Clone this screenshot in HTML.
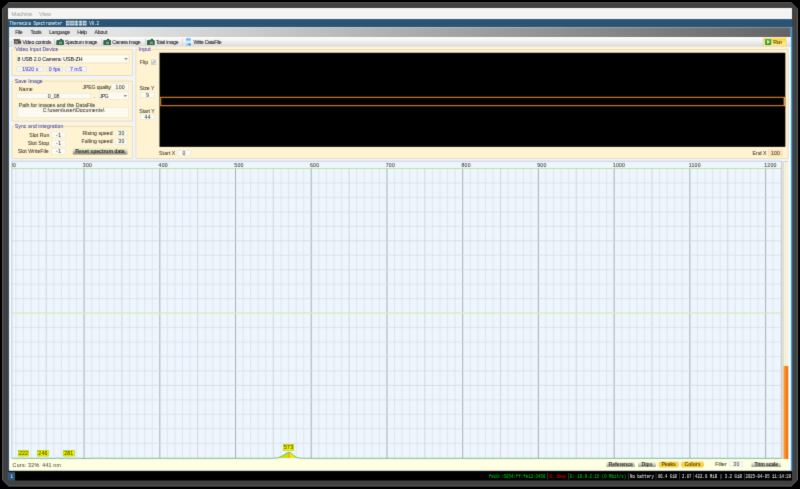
<!DOCTYPE html>
<html><head><meta charset="utf-8"><title>Theremino Spectrometer</title>
<style>
html,body{margin:0;padding:0;background:#000;width:800px;height:489px;overflow:hidden}
#s{position:absolute;left:0;top:0;width:3200px;height:1956px;transform:scale(0.25);transform-origin:0 0;overflow:hidden;filter:contrast(1.001);font-family:"Liberation Sans",sans-serif}
#w{position:absolute;left:0;top:0;width:800px;height:489px;overflow:hidden;filter:url(#bl)}
#s div,#s span,#s svg{position:absolute;box-sizing:border-box}
#s span{white-space:pre;-webkit-text-stroke:0.22px}
</style></head><body>
<svg width="0" height="0" style="position:absolute"><filter id="bl" x="0" y="0" width="100%" height="100%" color-interpolation-filters="sRGB"><feConvolveMatrix order="3" kernelMatrix="0.0113 0.0838 0.0113 0.0838 0.6193 0.0838 0.0113 0.0838 0.0113" edgeMode="duplicate" preserveAlpha="true"/></filter></svg>
<div id="w"><div id="s">
<svg style="left:0;top:0" width="3200" height="1956" viewBox="0 0 800 489">
<polygon points="8.6,2.5 791.4,2.5 797.6,8.8 797.6,480 791.4,486.2 8.6,486.2 2.4,480 2.4,8.8" fill="#404040" stroke="#767676" stroke-width="0.6"/>
</svg>
<div style="left:32.00px;top:32.00px;width:3136.00px;height:44.80px;background:#f5f4f2"></div>
<span style="left:46.33px;top:43.40px;font-size:23.60px;line-height:23.60px;color:#a8a8a8;font-weight:400;font-family:'Liberation Sans',sans-serif;letter-spacing:-0.843px;word-spacing:0.843px;">Machine</span>
<span style="left:155.77px;top:43.40px;font-size:23.60px;line-height:23.60px;color:#a8a8a8;font-weight:400;font-family:'Liberation Sans',sans-serif;letter-spacing:-0.356px;word-spacing:0.356px;">View</span>
<div style="left:32.00px;top:76.80px;width:3136.00px;height:32.00px;background:#285577"></div>
<span style="left:37.60px;top:81.20px;font-size:22.40px;line-height:22.40px;color:rgba(255,255,255,.9);font-weight:400;font-family:'Liberation Mono',monospace;transform-origin:0 50%;transform:scaleX(0.7142);">Theremino Spectrometer</span>
<div style="left:263.60px;top:82.80px;width:14.24px;height:19.20px;background:repeating-linear-gradient(0deg,rgba(255,255,255,.7) 0 2.40px,rgba(255,255,255,.2) 2.40px 5.60px),repeating-linear-gradient(90deg,rgba(255,255,255,.4) 0 2.40px,transparent 2.40px 6.40px)"></div>
<div style="left:280.64px;top:82.80px;width:14.24px;height:19.20px;background:repeating-linear-gradient(0deg,rgba(255,255,255,.7) 0 2.40px,rgba(255,255,255,.2) 2.40px 5.60px),repeating-linear-gradient(90deg,rgba(255,255,255,.4) 0 2.40px,transparent 2.40px 6.40px)"></div>
<div style="left:297.68px;top:82.80px;width:14.24px;height:19.20px;background:repeating-linear-gradient(0deg,rgba(255,255,255,.7) 0 2.40px,rgba(255,255,255,.2) 2.40px 5.60px),repeating-linear-gradient(90deg,rgba(255,255,255,.4) 0 2.40px,transparent 2.40px 6.40px)"></div>
<div style="left:314.72px;top:82.80px;width:14.24px;height:19.20px;background:repeating-linear-gradient(0deg,rgba(255,255,255,.7) 0 2.40px,rgba(255,255,255,.2) 2.40px 5.60px),repeating-linear-gradient(90deg,rgba(255,255,255,.4) 0 2.40px,transparent 2.40px 6.40px)"></div>
<div style="left:331.76px;top:82.80px;width:14.24px;height:19.20px;background:repeating-linear-gradient(0deg,rgba(255,255,255,.7) 0 2.40px,rgba(255,255,255,.2) 2.40px 5.60px),repeating-linear-gradient(90deg,rgba(255,255,255,.4) 0 2.40px,transparent 2.40px 6.40px)"></div>
<span style="left:356.80px;top:81.20px;font-size:22.40px;line-height:22.40px;color:rgba(255,255,255,.9);font-weight:400;font-family:'Liberation Mono',monospace;transform-origin:0 50%;transform:scaleX(0.7290);">V8.2</span>
<div style="left:32.00px;top:108.00px;width:4.80px;height:1777.20px;background:#285577"></div>
<div style="left:32.00px;top:1882.00px;width:3136.00px;height:3.20px;background:#285577"></div>
<div style="left:3163.20px;top:108.00px;width:5.60px;height:1777.20px;background:#2e9ef4"></div>
<div style="left:36.80px;top:108.00px;width:3126.40px;height:1774.40px;background:#eef5fe"></div>
<div style="left:36.80px;top:187.20px;width:5.20px;height:1650.00px;background:#fbfdff"></div>
<div style="left:3154.40px;top:187.20px;width:8.80px;height:1650.00px;background:#f8fbff"></div>
<div style="left:36.80px;top:108.80px;width:3126.40px;height:39.20px;background:linear-gradient(90deg,#e9e9e9 0%,#e2e2e2 15%,#9c9c9c 62%,#646464 100%)"></div>
<span style="left:60.77px;top:118.80px;font-size:20.80px;line-height:20.80px;color:#1c1c1c;font-weight:400;font-family:'Liberation Sans',sans-serif;letter-spacing:-1.151px;word-spacing:1.151px;">File</span>
<span style="left:122.06px;top:118.80px;font-size:20.80px;line-height:20.80px;color:#1c1c1c;font-weight:400;font-family:'Liberation Sans',sans-serif;letter-spacing:-0.969px;word-spacing:0.969px;">Tools</span>
<span style="left:197.09px;top:118.80px;font-size:20.80px;line-height:20.80px;color:#1c1c1c;font-weight:400;font-family:'Liberation Sans',sans-serif;letter-spacing:-1.304px;word-spacing:1.304px;">Language</span>
<span style="left:308.76px;top:118.80px;font-size:20.80px;line-height:20.80px;color:#1c1c1c;font-weight:400;font-family:'Liberation Sans',sans-serif;letter-spacing:-1.167px;word-spacing:1.167px;">Help</span>
<span style="left:378.20px;top:118.80px;font-size:20.80px;line-height:20.80px;color:#1c1c1c;font-weight:400;font-family:'Liberation Sans',sans-serif;letter-spacing:-0.689px;word-spacing:0.689px;">About</span>
<div style="left:36.80px;top:148.00px;width:3126.40px;height:39.20px;background:linear-gradient(180deg,#fdfdfd 0%,#f1f1f1 45%,#d9d9d9 100%)"></div>
<div style="left:44.80px;top:154.40px;width:2.80px;height:26.40px;background:repeating-linear-gradient(180deg,#b8b8b8 0 2.40px,transparent 2.40px 5.20px)"></div>
<span style="left:89.51px;top:158.00px;font-size:20.80px;line-height:20.80px;color:#1c1c1c;font-weight:400;font-family:'Liberation Sans',sans-serif;letter-spacing:-1.271px;word-spacing:1.271px;">Video controls</span>
<span style="left:260.40px;top:158.00px;font-size:20.80px;line-height:20.80px;color:#1c1c1c;font-weight:400;font-family:'Liberation Sans',sans-serif;letter-spacing:-1.887px;word-spacing:1.887px;">Spectrum image</span>
<span style="left:449.00px;top:158.00px;font-size:20.80px;line-height:20.80px;color:#1c1c1c;font-weight:400;font-family:'Liberation Sans',sans-serif;letter-spacing:-2.282px;word-spacing:2.282px;">Camera image</span>
<span style="left:623.67px;top:158.00px;font-size:20.80px;line-height:20.80px;color:#1c1c1c;font-weight:400;font-family:'Liberation Sans',sans-serif;letter-spacing:-1.746px;word-spacing:1.746px;">Total image</span>
<span style="left:773.76px;top:158.00px;font-size:20.80px;line-height:20.80px;color:#1c1c1c;font-weight:400;font-family:'Liberation Sans',sans-serif;letter-spacing:-1.575px;word-spacing:1.575px;">Write DataFile</span>
<div style="left:216.40px;top:154.40px;width:2.40px;height:27.20px;background:#c4c4c4"></div>
<div style="left:404.00px;top:154.40px;width:2.40px;height:27.20px;background:#c4c4c4"></div>
<div style="left:580.40px;top:154.40px;width:2.40px;height:27.20px;background:#c4c4c4"></div>
<div style="left:728.80px;top:154.40px;width:2.40px;height:27.20px;background:#c4c4c4"></div>
<svg style="left:225.20px;top:153.60px" width="32.0" height="26.4" viewBox="0 0 8 6.6">
<rect x="3.7" y="0.3" width="2.3" height="2" rx="0.3" fill="#2a4a33"/>
<rect x="0.1" y="1.6" width="7.6" height="4.8" rx="0.55" fill="#2c6240"/>
<rect x="0.1" y="3" width="1.6" height="3.4" rx="0.4" fill="#206a50"/>
<rect x="0.5" y="1.9" width="6.8" height="0.9" rx="0.4" fill="#3a7650"/>
<rect x="2.9" y="3.2" width="2.8" height="2.4" rx="0.3" fill="#a2c0a4"/>
<rect x="3.6" y="3.9" width="1.4" height="1.1" fill="#587a5e"/>
</svg>
<svg style="left:413.20px;top:153.60px" width="32.0" height="26.4" viewBox="0 0 8 6.6">
<rect x="3.7" y="0.3" width="2.3" height="2" rx="0.3" fill="#2a4a33"/>
<rect x="0.1" y="1.6" width="7.6" height="4.8" rx="0.55" fill="#2c6240"/>
<rect x="0.1" y="3" width="1.6" height="3.4" rx="0.4" fill="#206a50"/>
<rect x="0.5" y="1.9" width="6.8" height="0.9" rx="0.4" fill="#3a7650"/>
<rect x="2.9" y="3.2" width="2.8" height="2.4" rx="0.3" fill="#a2c0a4"/>
<rect x="3.6" y="3.9" width="1.4" height="1.1" fill="#587a5e"/>
</svg>
<svg style="left:588.40px;top:153.60px" width="32.0" height="26.4" viewBox="0 0 8 6.6">
<rect x="3.7" y="0.3" width="2.3" height="2" rx="0.3" fill="#2a4a33"/>
<rect x="0.1" y="1.6" width="7.6" height="4.8" rx="0.55" fill="#2c6240"/>
<rect x="0.1" y="3" width="1.6" height="3.4" rx="0.4" fill="#206a50"/>
<rect x="0.5" y="1.9" width="6.8" height="0.9" rx="0.4" fill="#3a7650"/>
<rect x="2.9" y="3.2" width="2.8" height="2.4" rx="0.3" fill="#a2c0a4"/>
<rect x="3.6" y="3.9" width="1.4" height="1.1" fill="#587a5e"/>
</svg>
<svg style="left:52.80px;top:156.00px" width="32.8" height="22.4" viewBox="0 0 16 11">
<rect x="0.3" y="0.2" width="10" height="2.4" fill="#555"/>
<rect x="1.5" y="2.4" width="10.5" height="6.8" fill="#2e2e2e"/>
<rect x="3.2" y="3.8" width="6.5" height="3.6" fill="#a8a860"/>
<rect x="3.2" y="6.2" width="4" height="1.4" fill="#b05040"/>
<polygon points="11.5,5.4 15.6,2.6 15.6,9.6 11.5,7.8" fill="#2a2a2a"/>
<rect x="4" y="9.2" width="9.5" height="1.5" fill="#777"/>
<rect x="10" y="0.4" width="3.6" height="2.4" fill="#444"/>
</svg>
<svg style="left:742.40px;top:152.00px" width="22.4" height="32.0" viewBox="0 0 5.6 8">
<rect x="0.3" y="0.3" width="5" height="7.4" rx="0.6" fill="#d6ecfb"/>
<path d="M0.3,0.9 Q0.3,0.3 0.9,0.3 L4.7,0.3 Q5.3,0.3 5.3,0.9 L5.1,2.2 Q2.6,3.2 0.5,2.3 Z" fill="#6cb9e9"/>
<path d="M0.4,5.6 Q2.6,5.0 5.3,5.5 L5.3,7.1 Q5.3,7.7 4.7,7.7 L0.9,7.7 Q0.3,7.7 0.3,7.1 Z" fill="#8ccaf1"/>
<ellipse cx="4.2" cy="6.5" rx="1.25" ry="1.1" fill="#3a86c6"/>
</svg>
<div style="left:3051.60px;top:150.80px;width:94.40px;height:34.40px;background:linear-gradient(180deg,#ffd51e 0%,#ffe45c 50%,#fff3b4 100%);border:2.00px solid #f3c35a;border-radius:3.20px"></div>
<svg style="left:3060.00px;top:156.00px" width="25.6" height="24.4" viewBox="0 0 12 12">
<rect x="0" y="0" width="12" height="12" rx="1" fill="#2e9a3c"/><rect x="0" y="0" width="12" height="5" rx="1" fill="#46b254"/>
<polygon points="4,2.2 9.3,6 4,9.8" fill="#f4fff0"/></svg>
<span style="left:3092.74px;top:158.00px;font-size:20.80px;line-height:20.80px;color:#3a3210;font-weight:400;font-family:'Liberation Sans',sans-serif;letter-spacing:-1.215px;word-spacing:1.215px;">Run</span>
<div style="left:46.40px;top:187.20px;width:484.40px;height:116.40px;background:#fff3d1"></div>
<div style="left:46.40px;top:196.40px;width:484.40px;height:107.20px;border:3.00px solid #ddd6be;border-radius:2.40px"></div>
<div style="left:57.20px;top:192.00px;width:179.60px;height:12.00px;background:#fff3d1"></div>
<span style="left:60.50px;top:188.40px;font-size:20.80px;line-height:20.80px;color:#4640b0;font-weight:400;font-family:'Liberation Sans',sans-serif;letter-spacing:-0.082px;word-spacing:0.082px;">Video Input Device</span>
<div style="left:46.40px;top:313.60px;width:484.40px;height:172.80px;background:#fff3d1"></div>
<div style="left:46.40px;top:322.80px;width:484.40px;height:163.60px;border:3.00px solid #ddd6be;border-radius:2.40px"></div>
<div style="left:55.60px;top:318.40px;width:118.80px;height:12.00px;background:#fff3d1"></div>
<span style="left:59.01px;top:314.80px;font-size:20.80px;line-height:20.80px;color:#4640b0;font-weight:400;font-family:'Liberation Sans',sans-serif;letter-spacing:0.123px;word-spacing:-0.123px;">Save Image</span>
<div style="left:46.40px;top:492.80px;width:484.40px;height:142.40px;background:#fff3d1"></div>
<div style="left:46.40px;top:503.60px;width:484.40px;height:131.60px;border:3.00px solid #ddd6be;border-radius:2.40px"></div>
<div style="left:55.20px;top:499.20px;width:201.60px;height:12.00px;background:#fff3d1"></div>
<span style="left:58.69px;top:495.60px;font-size:20.80px;line-height:20.80px;color:#4640b0;font-weight:400;font-family:'Liberation Sans',sans-serif;letter-spacing:0.293px;word-spacing:-0.293px;">Sync and integration</span>
<div style="left:541.60px;top:187.20px;width:2612.00px;height:448.00px;background:#fff3d1"></div>
<div style="left:541.60px;top:196.40px;width:2612.00px;height:438.80px;border:3.00px solid #ddd6be;border-radius:2.40px"></div>
<div style="left:550.80px;top:192.00px;width:55.60px;height:12.00px;background:#fff3d1"></div>
<span style="left:554.41px;top:188.40px;font-size:20.80px;line-height:20.80px;color:#4640b0;font-weight:400;font-family:'Liberation Sans',sans-serif;letter-spacing:0.530px;word-spacing:-0.530px;">Input</span>
<div style="left:65.60px;top:217.60px;width:452.00px;height:35.20px;background:linear-gradient(180deg,#fffdf6,#fff9ea);border:2.40px solid #d8d2c0;border-radius:2.40px"></div>
<span style="left:70.43px;top:225.60px;font-size:20.80px;line-height:20.80px;color:#101010;font-weight:400;font-family:'Liberation Sans',sans-serif;letter-spacing:-0.232px;word-spacing:0.232px;">8 USB 2.0 Camera: USB-ZH</span>
<svg style="left:495.60px;top:232.00px" width="16.0" height="8.8" viewBox="0 0 10 6"><polygon points="0,0 10,0 5,6" fill="#8a8a8a"/></svg>
<div style="left:66.00px;top:266.40px;width:110.00px;height:20.80px;background:#f4f3f3;border:2.00px solid #d8d8dc"></div>
<span style="left:88.79px;top:266.80px;font-size:20.80px;line-height:20.80px;color:#3a36c8;font-weight:400;font-family:'Liberation Sans',sans-serif;letter-spacing:0.492px;word-spacing:-0.492px;">1920 x</span>
<div style="left:184.80px;top:266.40px;width:67.20px;height:20.80px;background:#f4f3f3;border:2.00px solid #d8d8dc"></div>
<span style="left:195.17px;top:266.80px;font-size:20.80px;line-height:20.80px;color:#3a36c8;font-weight:400;font-family:'Liberation Sans',sans-serif;letter-spacing:0.455px;word-spacing:-0.455px;">0 fps</span>
<div style="left:260.80px;top:266.40px;width:87.20px;height:20.80px;background:#f4f3f3;border:2.00px solid #d8d8dc"></div>
<span style="left:279.87px;top:266.80px;font-size:20.80px;line-height:20.80px;color:#3a36c8;font-weight:400;font-family:'Liberation Sans',sans-serif;letter-spacing:0.254px;word-spacing:-0.254px;">7 mS</span>
<span style="left:74.67px;top:346.40px;font-size:20.80px;line-height:20.80px;color:#3c382e;font-weight:400;font-family:'Liberation Sans',sans-serif;letter-spacing:0.257px;word-spacing:-0.257px;">Name</span>
<span style="left:330.17px;top:337.20px;font-size:20.80px;line-height:20.80px;color:#3c382e;font-weight:400;font-family:'Liberation Sans',sans-serif;letter-spacing:-0.738px;word-spacing:0.738px;">JPEG quality</span>
<div style="left:446.40px;top:333.60px;width:68.00px;height:26.40px;background:#fffaf0;border:2.00px solid #cfe6e2"></div>
<span style="left:462.24px;top:336.80px;font-size:20.80px;line-height:20.80px;color:#3c3c3c;font-weight:400;font-family:'Liberation Sans',sans-serif;letter-spacing:0.802px;word-spacing:-0.802px;">100</span>
<div style="left:65.20px;top:372.00px;width:298.80px;height:22.40px;background:#fffaf0;border:2.00px solid #cfe6e2"></div>
<span style="left:191.22px;top:373.20px;font-size:20.80px;line-height:20.80px;color:#3c3c3c;font-weight:400;font-family:'Liberation Sans',sans-serif;letter-spacing:0.160px;word-spacing:-0.160px;">0_08</span>
<span style="left:375.91px;top:376.00px;font-size:20.80px;line-height:20.80px;color:#3c382e;font-weight:400;font-family:'Liberation Sans',sans-serif;letter-spacing:2.730px;word-spacing:-2.730px;">.</span>
<div style="left:397.20px;top:367.20px;width:118.80px;height:31.60px;background:#fffaf0;border:2.40px solid #cfe6e2"></div>
<span style="left:398.95px;top:373.20px;font-size:20.80px;line-height:20.80px;color:#3c382e;font-weight:400;font-family:'Liberation Sans',sans-serif;letter-spacing:-2.380px;word-spacing:2.380px;">JPG</span>
<svg style="left:492.80px;top:379.60px" width="16.0" height="8.8" viewBox="0 0 10 6"><polygon points="0,0 10,0 5,6" fill="#8a8a8a"/></svg>
<span style="left:74.59px;top:408.80px;font-size:20.80px;line-height:20.80px;color:#3c382e;font-weight:400;font-family:'Liberation Sans',sans-serif;letter-spacing:0.090px;word-spacing:-0.090px;">Path for images and the DataFile</span>
<div style="left:68.00px;top:429.20px;width:447.60px;height:41.20px;background:#fffaf0;border:2.00px solid #cfe6e2"></div>
<span style="left:170.68px;top:431.20px;font-size:20.80px;line-height:20.80px;color:#3c382e;font-weight:400;font-family:'Liberation Sans',sans-serif;letter-spacing:0.270px;word-spacing:-0.270px;">C:\users\user\Documents\</span>
<span style="left:116.63px;top:530.00px;font-size:20.80px;line-height:20.80px;color:#3c382e;font-weight:400;font-family:'Liberation Sans',sans-serif;letter-spacing:0.162px;word-spacing:-0.162px;">Slot Run</span>
<span style="left:110.63px;top:562.40px;font-size:20.80px;line-height:20.80px;color:#3c382e;font-weight:400;font-family:'Liberation Sans',sans-serif;letter-spacing:0.163px;word-spacing:-0.163px;">Slot Stop</span>
<span style="left:70.59px;top:594.00px;font-size:20.80px;line-height:20.80px;color:#3c382e;font-weight:400;font-family:'Liberation Sans',sans-serif;letter-spacing:0.094px;word-spacing:-0.094px;">Slot WriteFile</span>
<div style="left:204.80px;top:526.80px;width:58.40px;height:25.20px;background:#fffaf0;border:2.00px solid #cfe6e2"></div>
<span style="left:223.85px;top:529.40px;font-size:20.80px;line-height:20.80px;color:#3c3c3c;font-weight:400;font-family:'Liberation Sans',sans-serif;letter-spacing:1.808px;word-spacing:-1.808px;">-1</span>
<div style="left:204.80px;top:561.20px;width:58.40px;height:25.60px;background:#fffaf0;border:2.00px solid #cfe6e2"></div>
<span style="left:223.85px;top:564.00px;font-size:20.80px;line-height:20.80px;color:#3c3c3c;font-weight:400;font-family:'Liberation Sans',sans-serif;letter-spacing:1.808px;word-spacing:-1.808px;">-1</span>
<div style="left:204.80px;top:593.60px;width:58.40px;height:25.20px;background:#fffaf0;border:2.00px solid #cfe6e2"></div>
<span style="left:223.85px;top:596.20px;font-size:20.80px;line-height:20.80px;color:#3c3c3c;font-weight:400;font-family:'Liberation Sans',sans-serif;letter-spacing:1.808px;word-spacing:-1.808px;">-1</span>
<span style="left:330.14px;top:523.20px;font-size:20.80px;line-height:20.80px;color:#3c382e;font-weight:400;font-family:'Liberation Sans',sans-serif;letter-spacing:-0.013px;word-spacing:0.013px;">Rising speed</span>
<span style="left:326.16px;top:555.60px;font-size:20.80px;line-height:20.80px;color:#3c382e;font-weight:400;font-family:'Liberation Sans',sans-serif;letter-spacing:0.032px;word-spacing:-0.032px;">Falling speed</span>
<div style="left:460.00px;top:521.60px;width:50.00px;height:22.80px;background:#fffaf0;border:2.00px solid #cfe6e2"></div>
<span style="left:472.79px;top:523.00px;font-size:20.80px;line-height:20.80px;color:#3c3c3c;font-weight:400;font-family:'Liberation Sans',sans-serif;letter-spacing:1.288px;word-spacing:-1.288px;">30</span>
<div style="left:460.00px;top:554.40px;width:50.00px;height:23.60px;background:#fffaf0;border:2.00px solid #cfe6e2"></div>
<span style="left:472.79px;top:556.20px;font-size:20.80px;line-height:20.80px;color:#3c3c3c;font-weight:400;font-family:'Liberation Sans',sans-serif;letter-spacing:1.288px;word-spacing:-1.288px;">30</span>
<div style="left:290.80px;top:592.00px;width:219.20px;height:26.00px;background:linear-gradient(180deg,#f4f4cc 0%,#e4e4c8 30%,#bcbcae 62%,#7c7c72 100%);border-radius:4.00px"></div>
<span style="left:301.13px;top:593.80px;font-size:20.80px;line-height:20.80px;color:#262622;font-weight:700;font-family:'Liberation Sans',sans-serif;letter-spacing:-0.429px;word-spacing:0.429px;-webkit-text-stroke:0;">Reset spectrum data</span>
<span style="left:558.57px;top:239.20px;font-size:20.80px;line-height:20.80px;color:#463c2c;font-weight:400;font-family:'Liberation Sans',sans-serif;letter-spacing:0.049px;word-spacing:-0.049px;">Flip</span>
<div style="left:604.40px;top:238.80px;width:19.20px;height:20.00px;background:#f4f6fa;border:2.40px solid #a4a8b4"></div>
<svg style="left:606.40px;top:240.80px" width="16" height="16" viewBox="0 0 10 10"><path d="M1.8,5.6 L4,7.8 L8.4,2.2" fill="none" stroke="#4a4a4a" stroke-width="1.7"/></svg>
<span style="left:558.46px;top:341.60px;font-size:20.80px;line-height:20.80px;color:#3c382e;font-weight:400;font-family:'Liberation Sans',sans-serif;letter-spacing:-0.166px;word-spacing:0.166px;">Size Y</span>
<div style="left:560.00px;top:368.00px;width:60.00px;height:22.40px;background:#fffaf0;border:2.00px solid #cfe6e2"></div>
<span style="left:584.22px;top:369.20px;font-size:20.80px;line-height:20.80px;color:#3c3c3c;font-weight:400;font-family:'Liberation Sans',sans-serif;letter-spacing:2.742px;word-spacing:-2.742px;">9</span>
<span style="left:556.85px;top:433.60px;font-size:20.80px;line-height:20.80px;color:#3c382e;font-weight:400;font-family:'Liberation Sans',sans-serif;letter-spacing:-0.182px;word-spacing:0.182px;">Start Y</span>
<div style="left:560.00px;top:456.80px;width:60.00px;height:21.60px;background:#fffaf0;border:2.00px solid #cfe6e2"></div>
<span style="left:577.79px;top:457.60px;font-size:20.80px;line-height:20.80px;color:#3c3c3c;font-weight:400;font-family:'Liberation Sans',sans-serif;letter-spacing:1.288px;word-spacing:-1.288px;">44</span>
<span style="left:636.29px;top:603.20px;font-size:20.80px;line-height:20.80px;color:#3c382e;font-weight:400;font-family:'Liberation Sans',sans-serif;letter-spacing:0.289px;word-spacing:-0.289px;">Start X</span>
<div style="left:708.00px;top:602.00px;width:56.00px;height:22.40px;background:#fffaf0;border:2.00px solid #cfe6e2"></div>
<span style="left:730.22px;top:603.20px;font-size:20.80px;line-height:20.80px;color:#3c3c3c;font-weight:400;font-family:'Liberation Sans',sans-serif;letter-spacing:2.742px;word-spacing:-2.742px;">0</span>
<span style="left:3010.33px;top:603.60px;font-size:20.80px;line-height:20.80px;color:#3c382e;font-weight:400;font-family:'Liberation Sans',sans-serif;letter-spacing:-0.438px;word-spacing:0.438px;">End X</span>
<div style="left:3073.20px;top:601.20px;width:57.20px;height:23.60px;background:#ffe2b4;border:2.00px solid #f0dcb4"></div>
<span style="left:3083.64px;top:603.00px;font-size:20.80px;line-height:20.80px;color:#3c3c3c;font-weight:400;font-family:'Liberation Sans',sans-serif;letter-spacing:0.802px;word-spacing:-0.802px;">100</span>
<div style="left:637.20px;top:210.00px;width:2504.00px;height:377.60px;background:#8a8a88"></div>
<div style="left:639.20px;top:212.00px;width:2502.00px;height:374.80px;background:#000"></div>
<div style="left:640.00px;top:387.20px;width:2499.60px;height:38.00px;border:5.40px solid #c87a04"></div>
<div style="left:3135.20px;top:388.80px;width:4.80px;height:35.20px;background:#f0a030"></div>
<svg style="left:0;top:0" width="3200" height="1956" viewBox="0 0 800 489">
<rect x="11.8" y="161.2" width="769.7" height="297.2" fill="#edf5fe"/>
<line x1="15.95" y1="168.5" x2="15.95" y2="458.4" stroke="#d9d9dc" stroke-width="0.55"/>
<line x1="23.52" y1="168.5" x2="23.52" y2="458.4" stroke="#d9d9dc" stroke-width="0.55"/>
<line x1="31.10" y1="168.5" x2="31.10" y2="458.4" stroke="#d9d9dc" stroke-width="0.55"/>
<line x1="38.67" y1="168.5" x2="38.67" y2="458.4" stroke="#d9d9dc" stroke-width="0.55"/>
<line x1="46.24" y1="168.5" x2="46.24" y2="458.4" stroke="#c4c4c8" stroke-width="0.65"/>
<line x1="53.81" y1="168.5" x2="53.81" y2="458.4" stroke="#d9d9dc" stroke-width="0.55"/>
<line x1="61.38" y1="168.5" x2="61.38" y2="458.4" stroke="#d9d9dc" stroke-width="0.55"/>
<line x1="68.96" y1="168.5" x2="68.96" y2="458.4" stroke="#d9d9dc" stroke-width="0.55"/>
<line x1="76.53" y1="168.5" x2="76.53" y2="458.4" stroke="#d9d9dc" stroke-width="0.55"/>
<line x1="84.10" y1="168.5" x2="84.10" y2="458.4" stroke="#a6a6a8" stroke-width="0.9"/>
<line x1="91.67" y1="168.5" x2="91.67" y2="458.4" stroke="#d9d9dc" stroke-width="0.55"/>
<line x1="99.24" y1="168.5" x2="99.24" y2="458.4" stroke="#d9d9dc" stroke-width="0.55"/>
<line x1="106.82" y1="168.5" x2="106.82" y2="458.4" stroke="#d9d9dc" stroke-width="0.55"/>
<line x1="114.39" y1="168.5" x2="114.39" y2="458.4" stroke="#d9d9dc" stroke-width="0.55"/>
<line x1="121.96" y1="168.5" x2="121.96" y2="458.4" stroke="#c4c4c8" stroke-width="0.65"/>
<line x1="129.53" y1="168.5" x2="129.53" y2="458.4" stroke="#d9d9dc" stroke-width="0.55"/>
<line x1="137.10" y1="168.5" x2="137.10" y2="458.4" stroke="#d9d9dc" stroke-width="0.55"/>
<line x1="144.68" y1="168.5" x2="144.68" y2="458.4" stroke="#d9d9dc" stroke-width="0.55"/>
<line x1="152.25" y1="168.5" x2="152.25" y2="458.4" stroke="#d9d9dc" stroke-width="0.55"/>
<line x1="159.82" y1="168.5" x2="159.82" y2="458.4" stroke="#a6a6a8" stroke-width="0.9"/>
<line x1="167.39" y1="168.5" x2="167.39" y2="458.4" stroke="#d9d9dc" stroke-width="0.55"/>
<line x1="174.96" y1="168.5" x2="174.96" y2="458.4" stroke="#d9d9dc" stroke-width="0.55"/>
<line x1="182.54" y1="168.5" x2="182.54" y2="458.4" stroke="#d9d9dc" stroke-width="0.55"/>
<line x1="190.11" y1="168.5" x2="190.11" y2="458.4" stroke="#d9d9dc" stroke-width="0.55"/>
<line x1="197.68" y1="168.5" x2="197.68" y2="458.4" stroke="#c4c4c8" stroke-width="0.65"/>
<line x1="205.25" y1="168.5" x2="205.25" y2="458.4" stroke="#d9d9dc" stroke-width="0.55"/>
<line x1="212.82" y1="168.5" x2="212.82" y2="458.4" stroke="#d9d9dc" stroke-width="0.55"/>
<line x1="220.40" y1="168.5" x2="220.40" y2="458.4" stroke="#d9d9dc" stroke-width="0.55"/>
<line x1="227.97" y1="168.5" x2="227.97" y2="458.4" stroke="#d9d9dc" stroke-width="0.55"/>
<line x1="235.54" y1="168.5" x2="235.54" y2="458.4" stroke="#a6a6a8" stroke-width="0.9"/>
<line x1="243.11" y1="168.5" x2="243.11" y2="458.4" stroke="#d9d9dc" stroke-width="0.55"/>
<line x1="250.68" y1="168.5" x2="250.68" y2="458.4" stroke="#d9d9dc" stroke-width="0.55"/>
<line x1="258.26" y1="168.5" x2="258.26" y2="458.4" stroke="#d9d9dc" stroke-width="0.55"/>
<line x1="265.83" y1="168.5" x2="265.83" y2="458.4" stroke="#d9d9dc" stroke-width="0.55"/>
<line x1="273.40" y1="168.5" x2="273.40" y2="458.4" stroke="#c4c4c8" stroke-width="0.65"/>
<line x1="280.97" y1="168.5" x2="280.97" y2="458.4" stroke="#d9d9dc" stroke-width="0.55"/>
<line x1="288.54" y1="168.5" x2="288.54" y2="458.4" stroke="#d9d9dc" stroke-width="0.55"/>
<line x1="296.12" y1="168.5" x2="296.12" y2="458.4" stroke="#d9d9dc" stroke-width="0.55"/>
<line x1="303.69" y1="168.5" x2="303.69" y2="458.4" stroke="#d9d9dc" stroke-width="0.55"/>
<line x1="311.26" y1="168.5" x2="311.26" y2="458.4" stroke="#a6a6a8" stroke-width="0.9"/>
<line x1="318.83" y1="168.5" x2="318.83" y2="458.4" stroke="#d9d9dc" stroke-width="0.55"/>
<line x1="326.40" y1="168.5" x2="326.40" y2="458.4" stroke="#d9d9dc" stroke-width="0.55"/>
<line x1="333.98" y1="168.5" x2="333.98" y2="458.4" stroke="#d9d9dc" stroke-width="0.55"/>
<line x1="341.55" y1="168.5" x2="341.55" y2="458.4" stroke="#d9d9dc" stroke-width="0.55"/>
<line x1="349.12" y1="168.5" x2="349.12" y2="458.4" stroke="#c4c4c8" stroke-width="0.65"/>
<line x1="356.69" y1="168.5" x2="356.69" y2="458.4" stroke="#d9d9dc" stroke-width="0.55"/>
<line x1="364.26" y1="168.5" x2="364.26" y2="458.4" stroke="#d9d9dc" stroke-width="0.55"/>
<line x1="371.84" y1="168.5" x2="371.84" y2="458.4" stroke="#d9d9dc" stroke-width="0.55"/>
<line x1="379.41" y1="168.5" x2="379.41" y2="458.4" stroke="#d9d9dc" stroke-width="0.55"/>
<line x1="386.98" y1="168.5" x2="386.98" y2="458.4" stroke="#a6a6a8" stroke-width="0.9"/>
<line x1="394.55" y1="168.5" x2="394.55" y2="458.4" stroke="#d9d9dc" stroke-width="0.55"/>
<line x1="402.12" y1="168.5" x2="402.12" y2="458.4" stroke="#d9d9dc" stroke-width="0.55"/>
<line x1="409.70" y1="168.5" x2="409.70" y2="458.4" stroke="#d9d9dc" stroke-width="0.55"/>
<line x1="417.27" y1="168.5" x2="417.27" y2="458.4" stroke="#d9d9dc" stroke-width="0.55"/>
<line x1="424.84" y1="168.5" x2="424.84" y2="458.4" stroke="#c4c4c8" stroke-width="0.65"/>
<line x1="432.41" y1="168.5" x2="432.41" y2="458.4" stroke="#d9d9dc" stroke-width="0.55"/>
<line x1="439.98" y1="168.5" x2="439.98" y2="458.4" stroke="#d9d9dc" stroke-width="0.55"/>
<line x1="447.56" y1="168.5" x2="447.56" y2="458.4" stroke="#d9d9dc" stroke-width="0.55"/>
<line x1="455.13" y1="168.5" x2="455.13" y2="458.4" stroke="#d9d9dc" stroke-width="0.55"/>
<line x1="462.70" y1="168.5" x2="462.70" y2="458.4" stroke="#a6a6a8" stroke-width="0.9"/>
<line x1="470.27" y1="168.5" x2="470.27" y2="458.4" stroke="#d9d9dc" stroke-width="0.55"/>
<line x1="477.84" y1="168.5" x2="477.84" y2="458.4" stroke="#d9d9dc" stroke-width="0.55"/>
<line x1="485.42" y1="168.5" x2="485.42" y2="458.4" stroke="#d9d9dc" stroke-width="0.55"/>
<line x1="492.99" y1="168.5" x2="492.99" y2="458.4" stroke="#d9d9dc" stroke-width="0.55"/>
<line x1="500.56" y1="168.5" x2="500.56" y2="458.4" stroke="#c4c4c8" stroke-width="0.65"/>
<line x1="508.13" y1="168.5" x2="508.13" y2="458.4" stroke="#d9d9dc" stroke-width="0.55"/>
<line x1="515.70" y1="168.5" x2="515.70" y2="458.4" stroke="#d9d9dc" stroke-width="0.55"/>
<line x1="523.28" y1="168.5" x2="523.28" y2="458.4" stroke="#d9d9dc" stroke-width="0.55"/>
<line x1="530.85" y1="168.5" x2="530.85" y2="458.4" stroke="#d9d9dc" stroke-width="0.55"/>
<line x1="538.42" y1="168.5" x2="538.42" y2="458.4" stroke="#a6a6a8" stroke-width="0.9"/>
<line x1="545.99" y1="168.5" x2="545.99" y2="458.4" stroke="#d9d9dc" stroke-width="0.55"/>
<line x1="553.56" y1="168.5" x2="553.56" y2="458.4" stroke="#d9d9dc" stroke-width="0.55"/>
<line x1="561.14" y1="168.5" x2="561.14" y2="458.4" stroke="#d9d9dc" stroke-width="0.55"/>
<line x1="568.71" y1="168.5" x2="568.71" y2="458.4" stroke="#d9d9dc" stroke-width="0.55"/>
<line x1="576.28" y1="168.5" x2="576.28" y2="458.4" stroke="#c4c4c8" stroke-width="0.65"/>
<line x1="583.85" y1="168.5" x2="583.85" y2="458.4" stroke="#d9d9dc" stroke-width="0.55"/>
<line x1="591.42" y1="168.5" x2="591.42" y2="458.4" stroke="#d9d9dc" stroke-width="0.55"/>
<line x1="599.00" y1="168.5" x2="599.00" y2="458.4" stroke="#d9d9dc" stroke-width="0.55"/>
<line x1="606.57" y1="168.5" x2="606.57" y2="458.4" stroke="#d9d9dc" stroke-width="0.55"/>
<line x1="614.14" y1="168.5" x2="614.14" y2="458.4" stroke="#a6a6a8" stroke-width="0.9"/>
<line x1="621.71" y1="168.5" x2="621.71" y2="458.4" stroke="#d9d9dc" stroke-width="0.55"/>
<line x1="629.28" y1="168.5" x2="629.28" y2="458.4" stroke="#d9d9dc" stroke-width="0.55"/>
<line x1="636.86" y1="168.5" x2="636.86" y2="458.4" stroke="#d9d9dc" stroke-width="0.55"/>
<line x1="644.43" y1="168.5" x2="644.43" y2="458.4" stroke="#d9d9dc" stroke-width="0.55"/>
<line x1="652.00" y1="168.5" x2="652.00" y2="458.4" stroke="#c4c4c8" stroke-width="0.65"/>
<line x1="659.57" y1="168.5" x2="659.57" y2="458.4" stroke="#d9d9dc" stroke-width="0.55"/>
<line x1="667.14" y1="168.5" x2="667.14" y2="458.4" stroke="#d9d9dc" stroke-width="0.55"/>
<line x1="674.72" y1="168.5" x2="674.72" y2="458.4" stroke="#d9d9dc" stroke-width="0.55"/>
<line x1="682.29" y1="168.5" x2="682.29" y2="458.4" stroke="#d9d9dc" stroke-width="0.55"/>
<line x1="689.86" y1="168.5" x2="689.86" y2="458.4" stroke="#a6a6a8" stroke-width="0.9"/>
<line x1="697.43" y1="168.5" x2="697.43" y2="458.4" stroke="#d9d9dc" stroke-width="0.55"/>
<line x1="705.00" y1="168.5" x2="705.00" y2="458.4" stroke="#d9d9dc" stroke-width="0.55"/>
<line x1="712.58" y1="168.5" x2="712.58" y2="458.4" stroke="#d9d9dc" stroke-width="0.55"/>
<line x1="720.15" y1="168.5" x2="720.15" y2="458.4" stroke="#d9d9dc" stroke-width="0.55"/>
<line x1="727.72" y1="168.5" x2="727.72" y2="458.4" stroke="#c4c4c8" stroke-width="0.65"/>
<line x1="735.29" y1="168.5" x2="735.29" y2="458.4" stroke="#d9d9dc" stroke-width="0.55"/>
<line x1="742.86" y1="168.5" x2="742.86" y2="458.4" stroke="#d9d9dc" stroke-width="0.55"/>
<line x1="750.44" y1="168.5" x2="750.44" y2="458.4" stroke="#d9d9dc" stroke-width="0.55"/>
<line x1="758.01" y1="168.5" x2="758.01" y2="458.4" stroke="#d9d9dc" stroke-width="0.55"/>
<line x1="765.58" y1="168.5" x2="765.58" y2="458.4" stroke="#a6a6a8" stroke-width="0.9"/>
<line x1="773.15" y1="168.5" x2="773.15" y2="458.4" stroke="#d9d9dc" stroke-width="0.55"/>
<line x1="780.72" y1="168.5" x2="780.72" y2="458.4" stroke="#d9d9dc" stroke-width="0.55"/>
<line x1="11.8" y1="182.96" x2="781.5" y2="182.96" stroke="#d9d9dc" stroke-width="0.6"/>
<line x1="11.8" y1="197.42" x2="781.5" y2="197.42" stroke="#d9d9dc" stroke-width="0.6"/>
<line x1="11.8" y1="211.88" x2="781.5" y2="211.88" stroke="#d9d9dc" stroke-width="0.6"/>
<line x1="11.8" y1="226.34" x2="781.5" y2="226.34" stroke="#d9d9dc" stroke-width="0.6"/>
<line x1="11.8" y1="240.80" x2="781.5" y2="240.80" stroke="#d2d2d6" stroke-width="0.7"/>
<line x1="11.8" y1="255.26" x2="781.5" y2="255.26" stroke="#d9d9dc" stroke-width="0.6"/>
<line x1="11.8" y1="269.72" x2="781.5" y2="269.72" stroke="#d9d9dc" stroke-width="0.6"/>
<line x1="11.8" y1="284.18" x2="781.5" y2="284.18" stroke="#d9d9dc" stroke-width="0.6"/>
<line x1="11.8" y1="298.64" x2="781.5" y2="298.64" stroke="#d9d9dc" stroke-width="0.6"/>
<line x1="11.8" y1="313.10" x2="781.5" y2="313.10" stroke="#d8ebc6" stroke-width="1.5"/>
<line x1="11.8" y1="327.56" x2="781.5" y2="327.56" stroke="#d9d9dc" stroke-width="0.6"/>
<line x1="11.8" y1="342.02" x2="781.5" y2="342.02" stroke="#d9d9dc" stroke-width="0.6"/>
<line x1="11.8" y1="356.48" x2="781.5" y2="356.48" stroke="#d9d9dc" stroke-width="0.6"/>
<line x1="11.8" y1="370.94" x2="781.5" y2="370.94" stroke="#d9d9dc" stroke-width="0.6"/>
<line x1="11.8" y1="385.40" x2="781.5" y2="385.40" stroke="#d2d2d6" stroke-width="0.7"/>
<line x1="11.8" y1="399.86" x2="781.5" y2="399.86" stroke="#d9d9dc" stroke-width="0.6"/>
<line x1="11.8" y1="414.32" x2="781.5" y2="414.32" stroke="#d9d9dc" stroke-width="0.6"/>
<line x1="11.8" y1="428.78" x2="781.5" y2="428.78" stroke="#d9d9dc" stroke-width="0.6"/>
<line x1="11.8" y1="443.24" x2="781.5" y2="443.24" stroke="#d9d9dc" stroke-width="0.6"/>
<line x1="11.8" y1="168.5" x2="781.5" y2="168.5" stroke="#b6dc80" stroke-width="0.8"/>
<path d="M11.8,458.4 L11.8,161.2 L781.5,161.2 L781.5,458.4" fill="none" stroke="#c4c4c8" stroke-width="0.8"/>
<path d="M272.5,458 L278,457.6 L283,455.6 L287,453 L289,452.2 L291,453 L294,455.8 L297,457.4 L301.5,458 Z" fill="#e8ec10"/>
<path d="M278,457.8 L283,455.6 L287,453 L288.4,452.4 L288.4,458 Z" fill="#c4e410"/>
<line x1="289" y1="452.6" x2="289" y2="458" stroke="#e8a010" stroke-width="1.2"/>
<path d="M11.8,458.3 L41,458.3 L42,458.7 L44,458.1 L46,458.8 L49,458.3 L55,458.4 L58,458.0 L61,458.6 L66,458.1 L70,458.5 L76,458.2 L84,458.5 L95,458.2 L110,458.3 L272.5,458.3 L278,457.9 L283,455.6 L287,453 L289,452.2 L291,453 L294,455.8 L297,457.7 L301.5,458.3 L781.5,458.3" fill="none" stroke="#6eb470" stroke-width="0.85"/>
</svg>
<span style="left:331.38px;top:649.60px;font-size:20.80px;line-height:20.80px;color:#3a3a3a;font-weight:400;font-family:'Liberation Sans',sans-serif;letter-spacing:0.882px;word-spacing:-0.882px;">300</span>
<span style="left:634.26px;top:649.60px;font-size:20.80px;line-height:20.80px;color:#3a3a3a;font-weight:400;font-family:'Liberation Sans',sans-serif;letter-spacing:0.882px;word-spacing:-0.882px;">400</span>
<span style="left:937.14px;top:649.60px;font-size:20.80px;line-height:20.80px;color:#3a3a3a;font-weight:400;font-family:'Liberation Sans',sans-serif;letter-spacing:0.882px;word-spacing:-0.882px;">500</span>
<span style="left:1240.02px;top:649.60px;font-size:20.80px;line-height:20.80px;color:#3a3a3a;font-weight:400;font-family:'Liberation Sans',sans-serif;letter-spacing:0.882px;word-spacing:-0.882px;">600</span>
<span style="left:1542.90px;top:649.60px;font-size:20.80px;line-height:20.80px;color:#3a3a3a;font-weight:400;font-family:'Liberation Sans',sans-serif;letter-spacing:0.882px;word-spacing:-0.882px;">700</span>
<span style="left:1845.78px;top:649.60px;font-size:20.80px;line-height:20.80px;color:#3a3a3a;font-weight:400;font-family:'Liberation Sans',sans-serif;letter-spacing:0.882px;word-spacing:-0.882px;">800</span>
<span style="left:2148.66px;top:649.60px;font-size:20.80px;line-height:20.80px;color:#3a3a3a;font-weight:400;font-family:'Liberation Sans',sans-serif;letter-spacing:0.882px;word-spacing:-0.882px;">900</span>
<span style="left:2451.42px;top:649.60px;font-size:20.80px;line-height:20.80px;color:#3a3a3a;font-weight:400;font-family:'Liberation Sans',sans-serif;letter-spacing:0.640px;word-spacing:-0.640px;">1000</span>
<span style="left:2754.50px;top:649.60px;font-size:20.80px;line-height:20.80px;color:#3a3a3a;font-weight:400;font-family:'Liberation Sans',sans-serif;letter-spacing:1.026px;word-spacing:-1.026px;">1100</span>
<span style="left:3057.18px;top:649.60px;font-size:20.80px;line-height:20.80px;color:#3a3a3a;font-weight:400;font-family:'Liberation Sans',sans-serif;letter-spacing:0.640px;word-spacing:-0.640px;">1200</span>
<div style="left:48.80px;top:648.00px;width:32.00px;height:24.00px;overflow:hidden"><span style="left:-19.60px;top:1.60px;font-size:20.80px;line-height:20.80px;color:#3a3a3a">200</span></div>
<div style="left:72.40px;top:1801.20px;width:42.80px;height:24.00px;background:#f4f400;border:2.80px solid #8cc400"></div>
<span style="left:75.84px;top:1803.20px;font-size:20.80px;line-height:20.80px;color:#3a3a00;font-weight:400;font-family:'Liberation Sans',sans-serif;letter-spacing:0.602px;word-spacing:-0.602px;">222</span>
<div style="left:148.80px;top:1801.20px;width:45.20px;height:24.00px;background:#f4f400;border:2.80px solid #8cc400"></div>
<span style="left:153.44px;top:1803.20px;font-size:20.80px;line-height:20.80px;color:#3a3a00;font-weight:400;font-family:'Liberation Sans',sans-serif;letter-spacing:0.602px;word-spacing:-0.602px;">246</span>
<div style="left:252.40px;top:1801.20px;width:45.20px;height:24.00px;background:#f4f400;border:2.80px solid #8cc400"></div>
<span style="left:257.04px;top:1803.20px;font-size:20.80px;line-height:20.80px;color:#3a3a00;font-weight:400;font-family:'Liberation Sans',sans-serif;letter-spacing:0.602px;word-spacing:-0.602px;">281</span>
<div style="left:1132.40px;top:1776.80px;width:43.60px;height:25.60px;background:#f4f400;border:2.80px solid #8cc400"></div>
<span style="left:1136.24px;top:1779.60px;font-size:20.80px;line-height:20.80px;color:#3a3a00;font-weight:400;font-family:'Liberation Sans',sans-serif;letter-spacing:0.602px;word-spacing:-0.602px;">573</span>
<div style="left:3131.20px;top:646.40px;width:21.60px;height:1189.60px;background:#f4f2d8;border-left:2.80px solid #a8a8a0;border-top:2.40px solid #b4b4aa"></div>
<div style="left:3134.00px;top:1464.40px;width:18.80px;height:371.60px;background:linear-gradient(90deg,#ffa848 0%,#ff8a1e 35%,#f06a08 100%)"></div>
<div style="left:36.80px;top:1837.20px;width:3126.40px;height:45.20px;background:#ffffe2"></div>
<span style="left:50.36px;top:1849.60px;font-size:20.80px;line-height:20.80px;color:#4a4a44;font-weight:400;font-family:'Liberation Sans',sans-serif;letter-spacing:1.236px;word-spacing:-1.236px;">Curs: 32%  441 nm</span>
<div style="left:2424.80px;top:1847.60px;width:115.20px;height:20.40px;background:linear-gradient(180deg,#f0f0da 0%,#e0e0ce 35%,#c0c0b4 65%,#96968c 100%);border-radius:4.00px"></div>
<span style="left:2434.32px;top:1846.60px;font-size:20.80px;line-height:20.80px;color:#2c2c28;font-weight:700;font-family:'Liberation Sans',sans-serif;letter-spacing:-0.453px;word-spacing:0.453px;-webkit-text-stroke:0;">Reference</span>
<div style="left:2552.40px;top:1847.60px;width:71.20px;height:20.40px;background:linear-gradient(180deg,#f0f0da 0%,#e0e0ce 35%,#c0c0b4 65%,#96968c 100%);border-radius:4.00px"></div>
<span style="left:2566.37px;top:1846.60px;font-size:20.80px;line-height:20.80px;color:#2c2c28;font-weight:700;font-family:'Liberation Sans',sans-serif;letter-spacing:-0.341px;word-spacing:0.341px;-webkit-text-stroke:0;">Dips</span>
<div style="left:2634.80px;top:1847.20px;width:79.60px;height:22.00px;background:linear-gradient(180deg,#ffe838,#ffd820);border:3.20px solid #ffa214;border-radius:6.40px"></div>
<span style="left:2646.18px;top:1847.40px;font-size:20.80px;line-height:20.80px;color:#5a4a10;font-weight:700;font-family:'Liberation Sans',sans-serif;letter-spacing:-0.727px;word-spacing:0.727px;">Peaks</span>
<div style="left:2724.80px;top:1847.20px;width:90.40px;height:22.00px;background:linear-gradient(180deg,#ffe838,#ffd820);border:3.20px solid #ffa214;border-radius:6.40px"></div>
<span style="left:2738.36px;top:1847.40px;font-size:20.80px;line-height:20.80px;color:#5a4a10;font-weight:700;font-family:'Liberation Sans',sans-serif;letter-spacing:-0.360px;word-spacing:0.360px;">Colors</span>
<span style="left:2860.90px;top:1847.60px;font-size:20.80px;line-height:20.80px;color:#3a3a34;font-weight:400;font-family:'Liberation Sans',sans-serif;letter-spacing:-0.085px;word-spacing:0.085px;">Filter</span>
<div style="left:2917.60px;top:1845.20px;width:54.80px;height:22.40px;background:#fffaf0;border:2.00px solid #cfe6e2"></div>
<span style="left:2932.79px;top:1846.40px;font-size:20.80px;line-height:20.80px;color:#3c3c3c;font-weight:400;font-family:'Liberation Sans',sans-serif;letter-spacing:1.288px;word-spacing:-1.288px;">30</span>
<div style="left:3004.80px;top:1848.00px;width:119.20px;height:20.00px;background:linear-gradient(180deg,#f0f0da 0%,#e0e0ce 35%,#c0c0b4 65%,#96968c 100%);border-radius:4.00px"></div>
<span style="left:3018.07px;top:1846.80px;font-size:20.80px;line-height:20.80px;color:#2c2c28;font-weight:700;font-family:'Liberation Sans',sans-serif;letter-spacing:-0.938px;word-spacing:0.938px;-webkit-text-stroke:0;">Trim scale</span>
<div style="left:32.00px;top:1885.20px;width:3136.00px;height:37.20px;background:#000"></div>
<div style="left:32.40px;top:1888.80px;width:27.60px;height:33.60px;background:#285577;border:1.60px solid #4c7899"></div>
<span style="left:41.60px;top:1894.40px;font-size:22.40px;line-height:22.40px;color:rgba(255,255,255,.9);font-weight:400;font-family:'Liberation Mono',monospace;transform-origin:0 50%;transform:scaleX(0.7141);">1</span>
<span style="left:1955.20px;top:1894.00px;font-size:22.40px;line-height:22.40px;color:#00d000;font-weight:400;font-family:'Liberation Mono',monospace;transform-origin:0 50%;transform:scaleX(0.7336);">fec0::5054:ff:fe12:3456</span>
<div style="left:2188.20px;top:1892.00px;width:2.00px;height:26.40px;background:#666"></div>
<span style="left:2197.20px;top:1894.00px;font-size:22.40px;line-height:22.40px;color:#e00000;font-weight:400;font-family:'Liberation Mono',monospace;transform-origin:0 50%;transform:scaleX(0.7227);">W: down</span>
<div style="left:2271.80px;top:1892.00px;width:2.00px;height:26.40px;background:#666"></div>
<span style="left:2280.00px;top:1894.00px;font-size:22.40px;line-height:22.40px;color:#00d000;font-weight:400;font-family:'Liberation Mono',monospace;transform-origin:0 50%;transform:scaleX(0.7271);">E: 10.0.2.15 (0 Mbit/s)</span>
<div style="left:2511.80px;top:1892.00px;width:2.00px;height:26.40px;background:#666"></div>
<span style="left:2520.00px;top:1894.00px;font-size:22.40px;line-height:22.40px;color:#e8e8e8;font-weight:400;font-family:'Liberation Mono',monospace;transform-origin:0 50%;transform:scaleX(0.7082);">No battery</span>
<div style="left:2623.00px;top:1892.00px;width:2.00px;height:26.40px;background:#666"></div>
<span style="left:2632.00px;top:1894.00px;font-size:22.40px;line-height:22.40px;color:#e8e8e8;font-weight:400;font-family:'Liberation Mono',monospace;transform-origin:0 50%;transform:scaleX(0.7067);">86.4 GiB</span>
<div style="left:2717.40px;top:1892.00px;width:2.00px;height:26.40px;background:#666"></div>
<span style="left:2728.00px;top:1894.00px;font-size:22.40px;line-height:22.40px;color:#e8e8e8;font-weight:400;font-family:'Liberation Mono',monospace;transform-origin:0 50%;transform:scaleX(0.6918);">2.07</span>
<div style="left:2772.60px;top:1892.00px;width:2.00px;height:26.40px;background:#666"></div>
<span style="left:2780.00px;top:1894.00px;font-size:22.40px;line-height:22.40px;color:#e8e8e8;font-weight:400;font-family:'Liberation Mono',monospace;transform-origin:0 50%;transform:scaleX(0.7361);">422.6 MiB | 3.2 GiB</span>
<div style="left:2976.20px;top:1892.00px;width:2.00px;height:26.40px;background:#666"></div>
<span style="left:2982.40px;top:1894.00px;font-size:22.40px;line-height:22.40px;color:#e8e8e8;font-weight:400;font-family:'Liberation Mono',monospace;transform-origin:0 50%;transform:scaleX(0.7157);">2025-04-05 11:14:20</span>
</div></div></body></html>
